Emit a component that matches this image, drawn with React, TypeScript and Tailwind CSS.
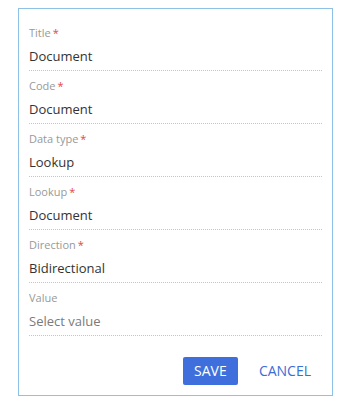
import React from 'react';

type Field = { label: string; value: string; required: boolean; placeholder?: boolean };

const fields: Field[] = [
  { label: 'Title', value: 'Document', required: true },
  { label: 'Code', value: 'Document', required: true },
  { label: 'Data type', value: 'Lookup', required: true },
  { label: 'Lookup', value: 'Document', required: true },
  { label: 'Direction', value: 'Bidirectional', required: true },
  { label: 'Value', value: 'Select value', required: false, placeholder: true },
];

const App: React.FC = () => {
  return (
    <div className="w-[347px] h-[402px] bg-white pt-[8px] pl-[18px]" style={{ fontFamily: '"Open Sans", "Noto Sans", sans-serif' }}>
      <div className="w-[315px] h-[388px] border border-[#8ec1e6] px-[10px] pt-[16px]">
        {/* Fields */}
        <div className="flex flex-col gap-[7px]">
          {fields.map((f) => (
            <div key={f.label} className="border-b border-dotted border-[#c4c4c4] pb-[4px]">
              <div className="text-[11px] leading-[16px] text-[#999999]">
                {f.label}
                {f.required && <span className="ml-[2px] text-[#e0484c]">*</span>}
              </div>
              <div
                className={`mt-[5px] text-[13px] leading-[20px] ${f.placeholder ? 'text-[#7a7a7a]' : 'text-[#333333]'}`}
              >
                {f.value}
              </div>
            </div>
          ))}
        </div>

        {/* Actions */}
        <div className="flex justify-end items-center gap-[10px] mt-[21px]">
          <button className="h-[28px] w-[55px] rounded-[2px] bg-[#3e6fdc] text-white text-[14px] leading-[28px]">
            SAVE
          </button>
          <button className="h-[28px] px-[11px] text-[#3a6ed6] text-[14px] leading-[28px]">
            CANCEL
          </button>
        </div>
      </div>
    </div>
  );
};

export default App;
